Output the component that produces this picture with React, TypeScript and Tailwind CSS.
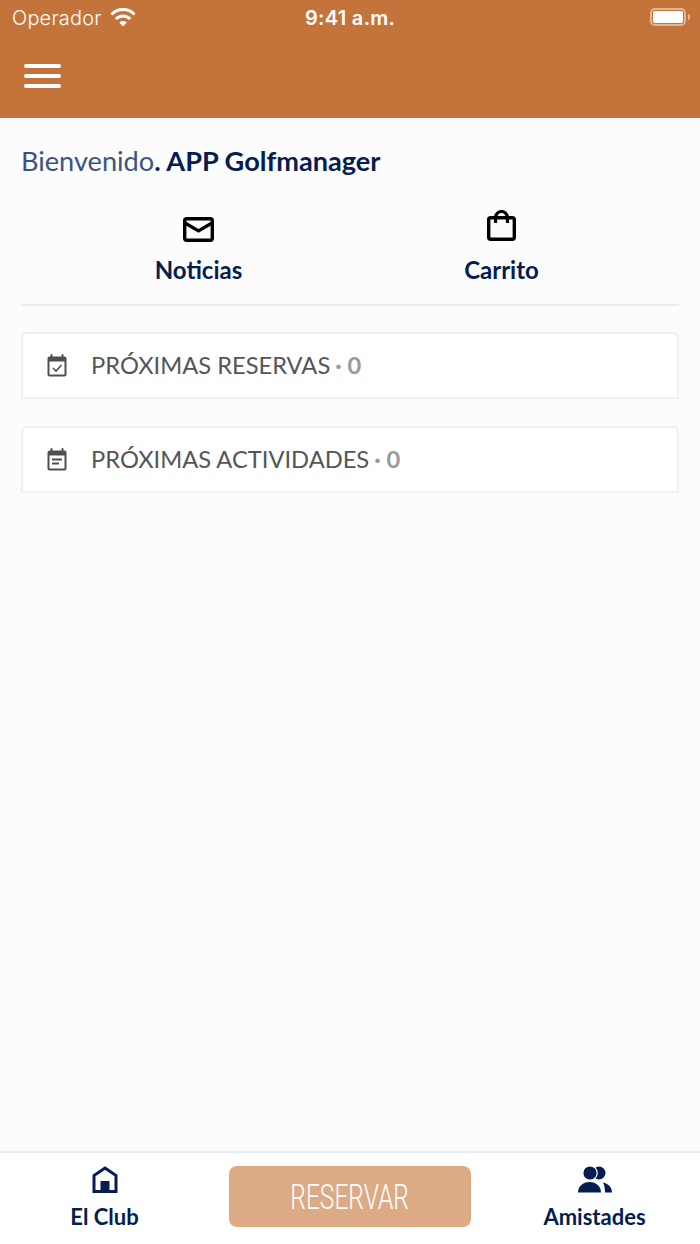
function CalendarIcon({ kind }: { kind: 'check' | 'list' }) {
  return (
    <svg width="20" height="23" viewBox="0 0 20 23" fill="none">
      <path d="M4.5 1v3M15.5 1v3" stroke="#4f4f4f" strokeWidth="2" strokeLinecap="round" />
      <path d="M2.5 2.5h15a2 2 0 0 1 2 2v16a2 2 0 0 1-2 2h-15a2 2 0 0 1-2-2v-16a2 2 0 0 1 2-2z" fill="#4f4f4f" />
      <rect x="2.5" y="7.5" width="15" height="13" fill="#ffffff" />
      {kind === 'check' ? (
        <path d="M6 14l3 3 5.5-6" stroke="#4f4f4f" strokeWidth="1.6" fill="none" />
      ) : (
        <path d="M5 11.5h10M5 15.5h7" stroke="#4f4f4f" strokeWidth="2" fill="none" />
      )}
    </svg>
  );
}

function MailIcon() {
  return (
    <svg width="31" height="25" viewBox="0 0 31 25" fill="none" className="mb-[1px]">
      <rect x="1.7" y="1.7" width="27.6" height="21.600" rx="2" stroke="#000" strokeWidth="3.4" />
      <path d="M2 6l13.500 8L29 6" stroke="#000" strokeWidth="3.2" />
    </svg>
  );
}

function BagIcon() {
  return (
    <svg width="29" height="31" viewBox="0 0 29 31" fill="none" className="mb-[2px]">
      <rect x="1.7" y="7.7" width="25.6" height="21.600" rx="2" stroke="#000" strokeWidth="3.4" />
      <path d="M8.5 13V7.500a6 6 0 0 1 12 0V13" stroke="#000" strokeWidth="3.2" />
    </svg>
  );
}

function StatusBar() {
  return (
    <div className="h-[36px] relative flex items-center justify-between pl-3 pr-[10px] text-white font-['Inter',sans-serif]">
      <div className="flex items-center gap-[8px]">
        <span className="text-[20px] font-light leading-none tracking-[0.2px]">Operador</span>
        <svg width="26" height="19" viewBox="0 0 26 19" className="-mt-[2px]" fill="none">
          <path d="M13 18.500L9.300 14.500a5.500 5.500 0 0 1 7.400 0z" fill="#fff" />
          <path d="M5.800 11a10 10 0 0 1 14.400 0" stroke="#fff" strokeWidth="3" />
          <path d="M1.500 6.500a16 16 0 0 1 23 0" stroke="#fff" strokeWidth="3" />
        </svg>
      </div>
      <span className="absolute left-[305px] text-[20px] font-semibold leading-none tracking-[0.3px]">9:41 a.m.</span>
      <div className="flex items-center gap-[2px] -mt-[2px]">
        <div className="w-[36px] h-[18px] rounded-[5px] border-2 border-[#e2b793] p-[1px]">
          <div className="w-full h-full rounded-[2px] bg-white" />
        </div>
        <div className="w-[2px] h-[6px] rounded-r-sm bg-[#e2b793]" />
      </div>
    </div>
  );
}

function Shortcut({ label, icon }: { label: string; icon: React.ReactNode }) {
  return (
    <div className="flex flex-col items-center">
      <div className="h-[32px] flex items-end justify-center">{icon}</div>
      <span className="mt-[12px] text-[24px] leading-[30px] font-bold text-[#051d50]">{label}</span>
    </div>
  );
}

function Row({ label, count, kind }: { label: string; count: number; kind: 'check' | 'list' }) {
  return (
    <div className="h-[67px] flex items-center pl-[24px] bg-white rounded-t-[6px] border-2 border-[#f0f0f0]">
      <CalendarIcon kind={kind} />
      <span className="ml-[24px] text-[23.7px] text-[#555555]">{label}</span>
      <span className="ml-[5px] text-[23.7px] font-bold text-[#9a9a9a]">· {count}</span>
    </div>
  );
}

export default function App() {
  return (
    <div className="w-[700px] h-[1244px] flex flex-col bg-[#fcfcfc] font-['Lato',sans-serif] overflow-hidden">
      <header className="h-[118px] shrink-0 bg-[#c4743a]">
        <StatusBar />
        <div className="mt-[28px] ml-[24px] w-[37px] flex flex-col gap-[6px]">
          <div className="h-[4px] rounded-full bg-white" />
          <div className="h-[4px] rounded-full bg-white" />
          <div className="h-[4px] rounded-full bg-white" />
        </div>
      </header>

      <main className="flex-1 px-[21px]">
        <p className="pt-[26px] text-[27.15px] leading-[34px] text-[#3b5580]">
          Bienvenido<span className="font-bold text-[#051d50]">. APP Golfmanager</span>
        </p>
        <div className="mt-[33px] pb-[19px] px-[26px] grid grid-cols-2 border-b-2 border-[#ececec]">
          <Shortcut label="Noticias" icon={<MailIcon />} />
          <Shortcut label="Carrito" icon={<BagIcon />} />
        </div>
        <div className="mt-[26px] flex flex-col gap-[27px]">
          <Row label="PRÓXIMAS RESERVAS" count={0} kind="check" />
          <Row label="PRÓXIMAS ACTIVIDADES" count={0} kind="list" />
        </div>
      </main>

      <footer className="h-[93px] shrink-0 bg-white border-t-2 border-[#e6edf6] grid grid-cols-[209px_1fr_209px] pt-[13px]">
        <div className="flex flex-col items-center">
          <svg width="26" height="27" viewBox="0 0 26 27">
            <path d="M13 2L24 9.500V25.500H2V9.500z" fill="none" stroke="#051d50" strokeWidth="3" />
            <rect x="8.500" y="15" width="9" height="10" fill="#051d50" />
          </svg>
          <span className="mt-[11px] text-[22px] leading-[26px] font-bold text-[#051d50]">El Club</span>
        </div>
        <div className="flex justify-center">
          <div className="w-[242px] h-[61px] rounded-[8px] bg-[#dcab86] flex items-center justify-center">
            <span className="mt-[3px] text-[35px] font-light text-white font-['Roboto',sans-serif] scale-x-[0.7]">RESERVAR</span>
          </div>
        </div>
        <div className="flex flex-col items-center pr-[2px]">
          <svg width="34" height="27" viewBox="0 0 34 27">
            <circle cx="21" cy="7" r="6.500" fill="#051d50" />
            <circle cx="12" cy="7" r="7.200" fill="#051d50" stroke="#fff" strokeWidth="1.200" />
            <path d="M0 26.500c0-6 5-10.500 11.500-10.500S23 20.500 23 26.500z" fill="#051d50" />
            <path d="M25 16.500c5 1 9 4.500 9 10h-7c0-3.500-.5-7-2-10z" fill="#051d50" />
          </svg>
          <span className="mt-[11px] text-[22px] leading-[26px] font-bold text-[#051d50]">Amistades</span>
        </div>
      </footer>
    </div>
  );
}
